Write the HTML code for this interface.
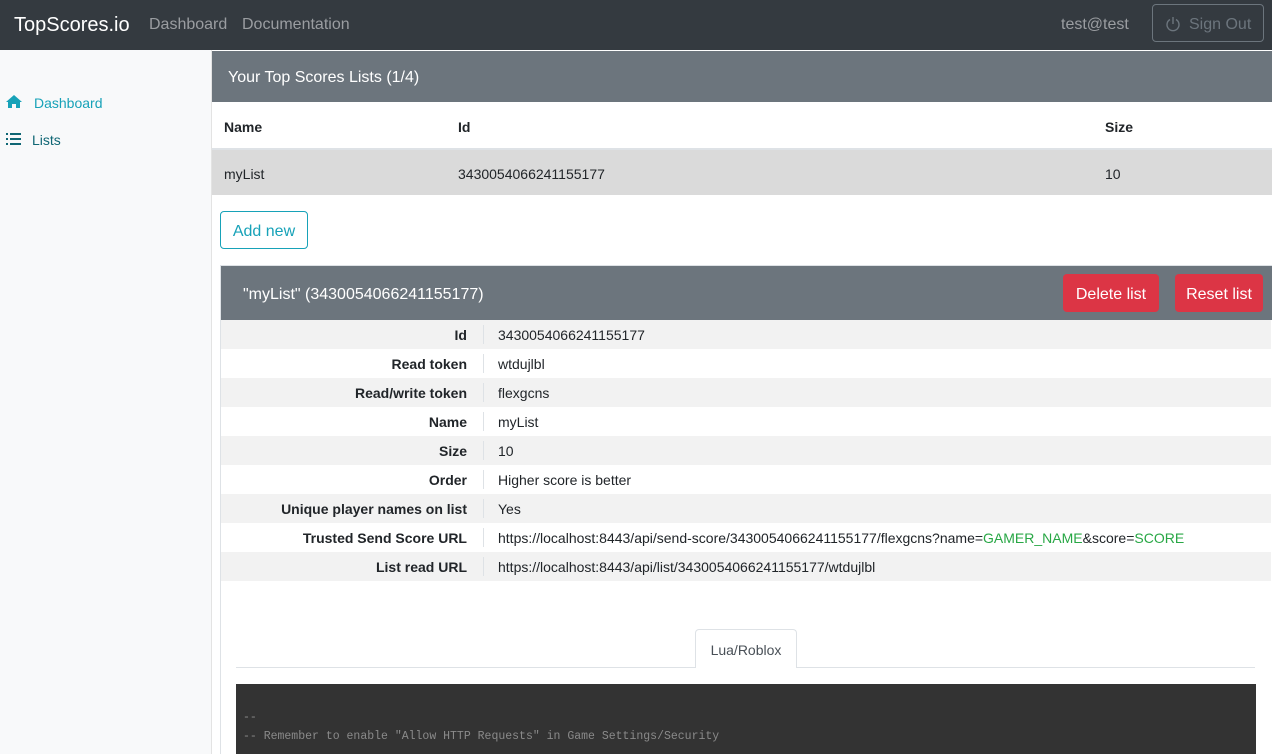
<!DOCTYPE html><html style="height:754px;overflow:hidden"><head><style>
body{margin:0;width:1272px;height:754px;overflow:hidden;font-family:"Liberation Sans",sans-serif;font-size:14px;color:#212529;background:#fff;position:relative}
.a{position:absolute}
.nav{left:0;top:0;width:1272px;height:50px;background:#343a40}
.side{left:0;top:50px;width:211px;height:704px;background:#f8f9fa;border-right:1px solid #e3e3e3}
.row{position:absolute;left:221px;width:1050px;height:29px;line-height:31px}
.row .l{position:absolute;right:804px;font-weight:bold;text-align:right}
.row .v{position:absolute;left:277px}
.row .s{position:absolute;left:262px;top:5px;width:1px;height:19px;background:#dee2e6}
.g{color:#28a745}
</style></head><body>
<div class="a nav"></div>
<div class="a" style="left:14px;top:14px;font-size:20px;color:#fff">TopScores.io</div>
<div class="a" style="left:149px;top:16px;font-size:16px;color:#9a9da1">Dashboard</div>
<div class="a" style="left:242px;top:16px;font-size:16px;color:#9a9da1">Documentation</div>
<div class="a" style="left:1061px;top:16px;font-size:16px;color:#9a9da1">test@test</div>
<div class="a" style="left:1152px;top:4px;width:110px;height:36px;border:1px solid #6c757d;border-radius:4px;color:#6c757d;font-size:16px;line-height:40px"><svg class="a" style="left:12px;top:11px" width="16" height="17" viewBox="0 0 16 17"><path d="M5 3.5A6 6 0 1 0 11 3.5M8 1v7" fill="none" stroke="#6c757d" stroke-width="1.4"/></svg><span style="position:absolute;left:36px">Sign Out</span></div>
<div class="a side"></div>
<svg class="a" style="left:6px;top:95px" width="16" height="13" viewBox="0 0 16 13"><path d="M8 0L0 7h2v6h4V9h4v4h4V7h2z" fill="#17a2b8"/></svg>
<div class="a" style="left:34px;top:95px;color:#17a2b8">Dashboard</div>
<svg class="a" style="left:6px;top:133px" width="15" height="12" viewBox="0 0 15 12"><path d="M0 0h2v2H0zM0 5h2v2H0zM0 10h2v2H0zM4 0h11v2H4zM4 5h11v2H4zM4 10h11v2H4z" fill="#0f6674"/></svg>
<div class="a" style="left:32px;top:132px;color:#0f6674">Lists</div>
<div class="a" style="left:212px;top:51px;width:1060px;height:51px;background:#6c757d"></div>
<div class="a" style="left:228px;top:69px;font-size:16px;color:#fff">Your Top Scores Lists (1/4)</div>
<div class="a" style="left:212px;top:148px;width:1060px;height:2px;background:#dee2e6"></div>
<div class="a" style="left:224px;top:119px;font-weight:bold">Name</div>
<div class="a" style="left:458px;top:119px;font-weight:bold">Id</div>
<div class="a" style="left:1105px;top:119px;font-weight:bold">Size</div>
<div class="a" style="left:212px;top:150px;width:1060px;height:45px;background:#dadada"></div>
<div class="a" style="left:224px;top:166px">myList</div>
<div class="a" style="left:458px;top:166px">3430054066241155177</div>
<div class="a" style="left:1105px;top:166px">10</div>
<div class="a" style="left:220px;top:211px;width:86px;height:36px;border:1px solid #17a2b8;border-radius:4px;color:#17a2b8;font-size:16px;line-height:40px;text-align:center">Add new</div>
<div class="a" style="left:220px;top:265px;width:1051px;height:495px;border:1px solid #dee2e6"></div>
<div class="a" style="left:221px;top:266px;width:1051px;height:54px;background:#6c757d"></div>
<div class="a" style="left:243px;top:286px;font-size:16px;color:#fff">"myList" (3430054066241155177)</div>
<div class="a" style="left:1063px;top:274px;width:96px;height:38px;background:#dc3545;border-radius:4px;color:#fff;font-size:16px;line-height:42px;text-align:center">Delete list</div>
<div class="a" style="left:1175px;top:274px;width:88px;height:38px;background:#dc3545;border-radius:4px;color:#fff;font-size:16px;line-height:42px;text-align:center">Reset list</div>
<div class="row" style="top:320px;background:#f2f2f2"><span class="l">Id</span><span class="s"></span><span class="v">3430054066241155177</span></div>
<div class="row" style="top:349px"><span class="l">Read token</span><span class="s"></span><span class="v">wtdujlbl</span></div>
<div class="row" style="top:378px;background:#f2f2f2"><span class="l">Read/write token</span><span class="s"></span><span class="v">flexgcns</span></div>
<div class="row" style="top:407px"><span class="l">Name</span><span class="s"></span><span class="v">myList</span></div>
<div class="row" style="top:436px;background:#f2f2f2"><span class="l">Size</span><span class="s"></span><span class="v">10</span></div>
<div class="row" style="top:465px"><span class="l">Order</span><span class="s"></span><span class="v">Higher score is better</span></div>
<div class="row" style="top:494px;background:#f2f2f2"><span class="l">Unique player names on list</span><span class="s"></span><span class="v">Yes</span></div>
<div class="row" style="top:523px"><span class="l">Trusted Send Score URL</span><span class="s"></span><span class="v">https://localhost:8443/api/send-score/3430054066241155177/flexgcns?name=<span class="g">GAMER_NAME</span>&amp;score=<span class="g">SCORE</span></span></div>
<div class="row" style="top:552px;background:#f2f2f2"><span class="l">List read URL</span><span class="s"></span><span class="v">https://localhost:8443/api/list/3430054066241155177/wtdujlbl</span></div>
<div class="a" style="left:236px;top:667px;width:1019px;height:1px;background:#dee2e6"></div>
<div class="a" style="left:695px;top:629px;width:100px;height:38px;border:1px solid #dee2e6;border-bottom:none;border-radius:4px 4px 0 0;background:#fff;text-align:center;line-height:40px;color:#495057">Lua/Roblox</div>
<div class="a" style="left:236px;top:684px;width:1020px;height:70px;background:#333;font-family:'Liberation Mono',monospace;font-size:11.5px;color:#8a8a8a"><div class="a" style="left:7px;top:27px">--</div><div class="a" style="left:7px;top:46px">-- Remember to enable "Allow HTTP Requests" in Game Settings/Security</div></div>
</body></html>
